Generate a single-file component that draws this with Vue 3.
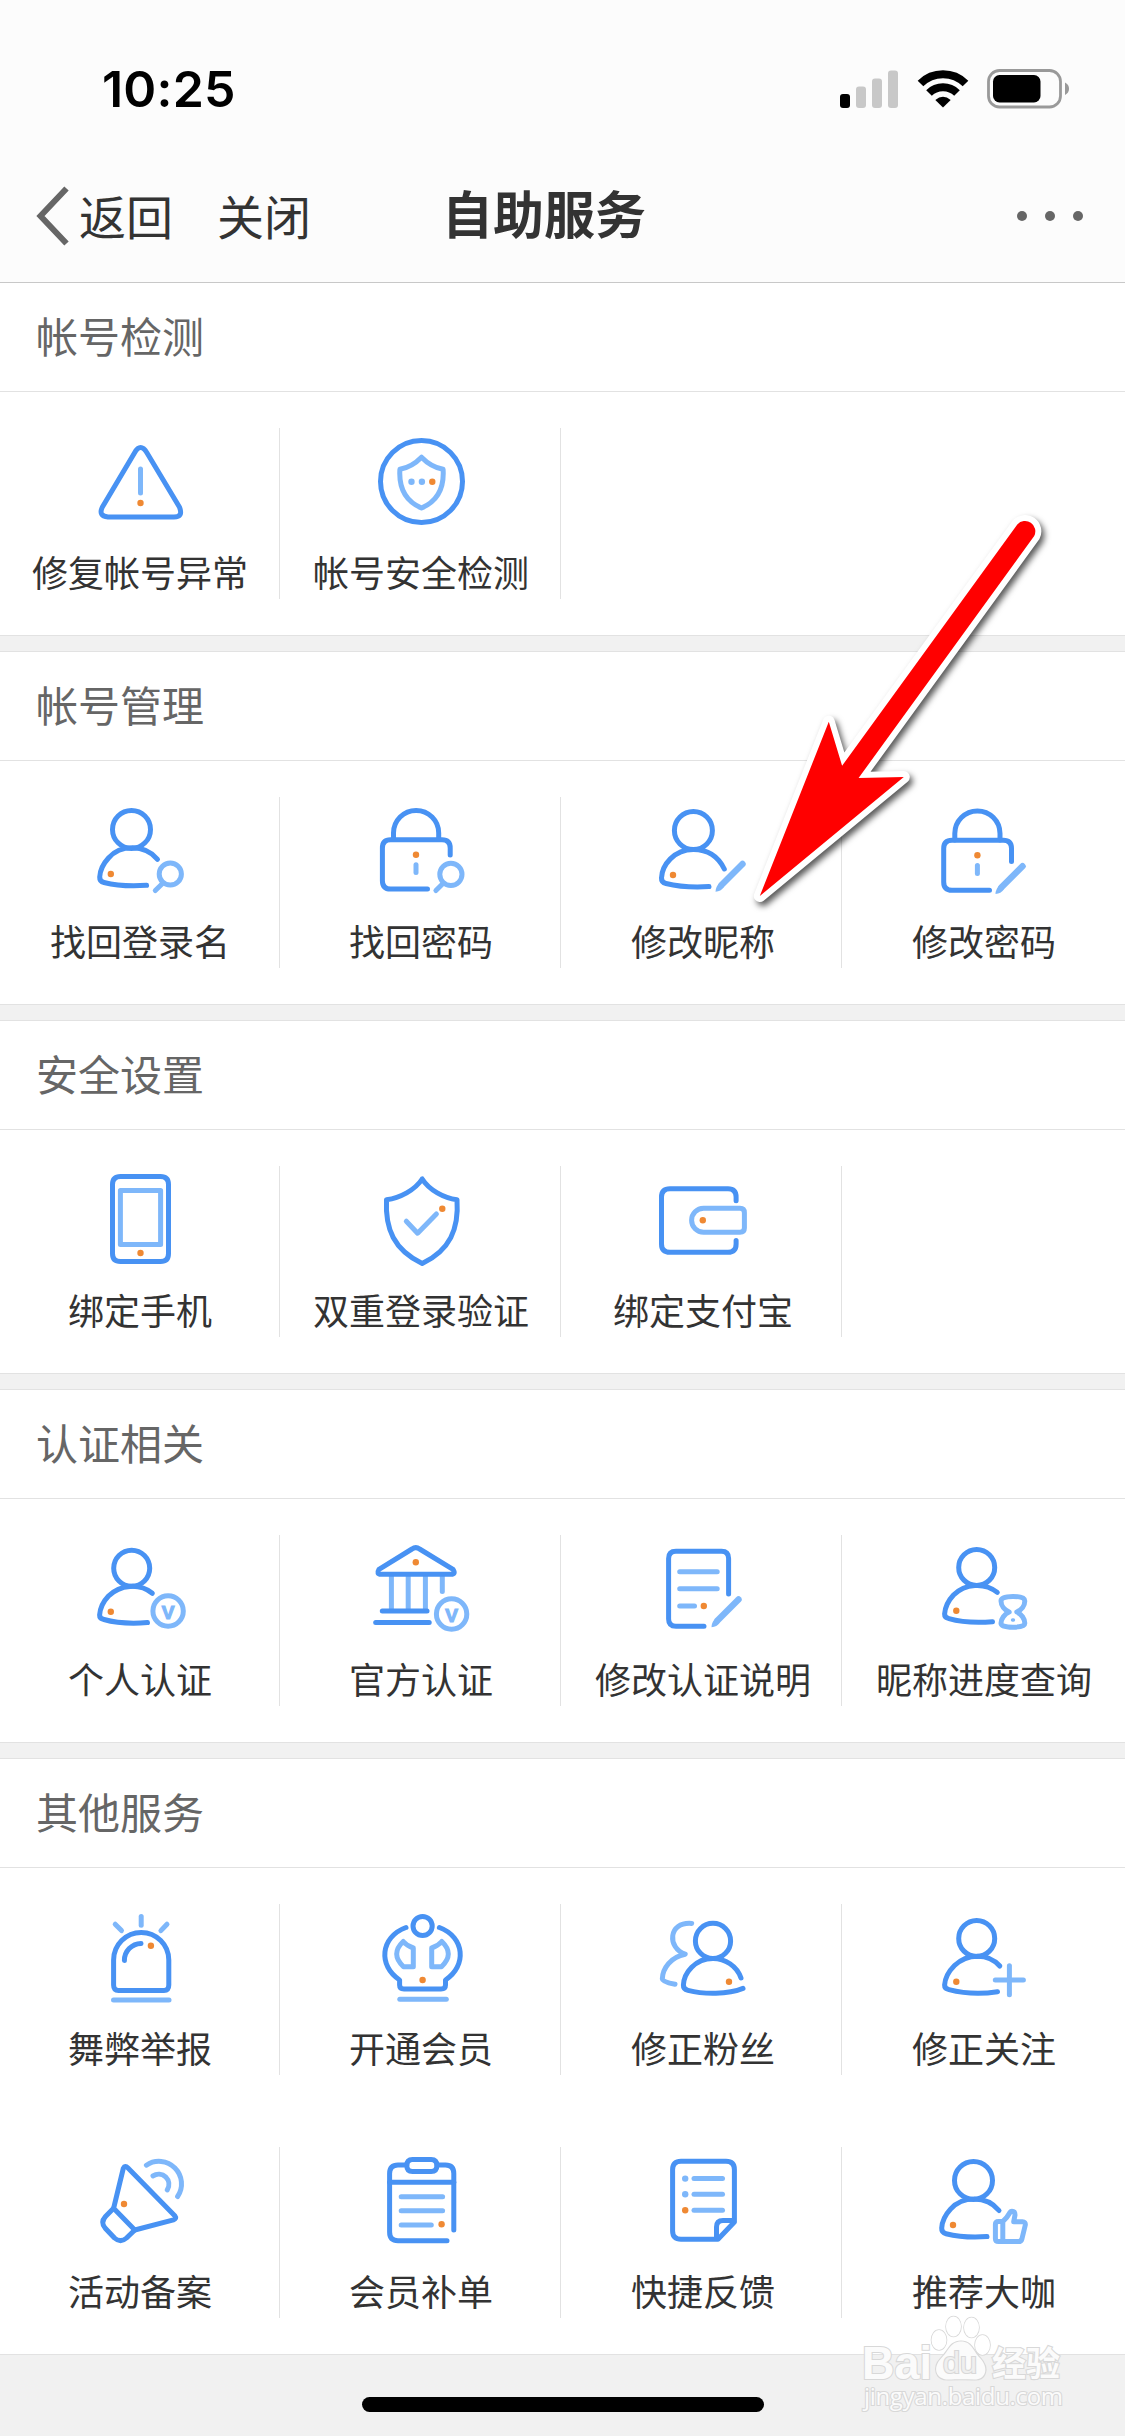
<script setup>
const ring = (x, y, r) => `M${x - r} ${y}a${r} ${r} 0 1 0 ${2 * r} 0a${r} ${r} 0 1 0 ${-2 * r} 0Z`

const icons = {
  warning: {
    main: ['M54.6 24.7Q60.5 14.4 66.9 24.7L99.4 79Q103.5 89 94 89H28Q18 88 22.4 79Z'],
    light: ['M60.5 41V65'],
    dots: [[60.5, 75]],
  },
  shieldRing: {
    main: [ring(61.5, 53.5, 41)],
    light: ['M61.5 29.2Q52 39 39.9 41.3Q38 70 61.5 80Q85 70 83.1 41.3Q71 39 61.5 29.2Z'],
    dots: [[72.3, 53.7]],
    lightDots: [[51.5, 53.7], [61.9, 53.7]],
  },
  userSearch: {
    main: [ring(51.5, 32.4, 19), 'M77.5 62.3C64 46.5 40 48 28.5 61C22.5 67.5 20 74 19.7 80Q19.5 84.5 24 85.5C36 88.5 52 89.3 66.6 88.3'],
    light: [ring(90.3, 77, 11.1), 'M82.5 86.5L75.3 93.5'],
    dots: [[30.8, 77]],
  },
  lockSearch: {
    main: ['M33.5 42V36A22.6 22.6 0 0 1 78.7 36V42', 'M90.2 58V51Q90.2 42.7 82 42.7H30.5Q22.4 42.7 22.4 51V83.7Q22.4 92 30.5 92H67.5'],
    light: ['M56 67.7V75.5', ring(90.9, 77.3, 11.1), 'M83 86.5L75.9 93.5'],
    dots: [[56, 57.7]],
  },
  userEdit: {
    main: [ring(52.4, 33.5, 19), 'M83.3 72C76 57 64 52.5 52.4 52.5C33 52.5 21 68 20.5 81Q20.3 85.5 25 86.5C37 89.5 53 90.5 68 89.6'],
    dots: [[32, 78]],
    pen: [0, 0],
  },
  lockEdit: {
    main: ['M31.8 43V36.5A22.6 22.6 0 0 1 77 36.5V43', 'M88.5 64.5V51.5Q88.5 43.3 80.3 43.3H29Q20.7 43.3 20.7 51.5V85Q20.7 93.3 29 93.3H66.5'],
    light: ['M54.4 68.5V76.5'],
    dots: [[54.4, 58.3]],
    pen: [-2, 2.2],
  },
  phone: {
    main: ['M40.5 10.5H80.5Q88.5 10.5 88.5 18.5V87.5Q88.5 95.5 80.5 95.5H40.5Q32.5 95.5 32.5 87.5V18.5Q32.5 10.5 40.5 10.5Z'],
    light: ['M40.4 24.5H80.6V78.5H40.4Z'],
    dots: [[60.5, 87]],
  },
  shieldCheck: {
    main: ['M62.2 13C55 24 40 32 26.5 33.7C25 63 34 84 62.2 97.5C90 84 99 63 97 33.7C84 32 69 24 62.2 13Z'],
    light: ['M46.3 55.2L57.6 67.2L76.4 48'],
    dots: [[82.3, 42.7]],
  },
  wallet: {
    main: ['M95.1 34.7V31Q95.1 22.7 87 22.7H29Q20.5 22.7 20.5 31V78Q20.5 86.3 29 86.3H87Q95.1 86.3 95.1 78V74.5'],
    light: ['M62.6 42.3H99Q103.4 42.3 103.4 46.7V62Q103.4 66.3 99 66.3H62.6A12 12 0 0 1 62.6 42.3Z'],
    dots: [[61.8, 54.3]],
  },
  userVerified: {
    main: [ring(51.7, 33.3, 18), 'M72.3 58.3C59.5 47.8 40 49.5 28.5 61C23 66.8 20 74 19.6 80Q19.5 83.5 24 84.5C36 88 52 88.8 67.5 87.6'],
    dots: [[30.8, 76.7]],
    badge: [88.1, 76],
  },
  bank: {
    main: ['M52 14Q55.8 11.2 59.6 14L93 34.3Q96.2 39.3 91 39.3H21Q16 39.3 19 34.3Z', 'M22.3 76H67', 'M15.7 87.6H69.2'],
    under: ['M31.4 41V74', 'M48.2 41V74', 'M65.4 41V74', 'M82.3 41V56.5'],
    dots: [[55.8, 27.3]],
    badge: [91.6, 79],
  },
  docEdit: {
    main: ['M87.6 59V23.5Q87.6 16.3 80.5 16.3H35Q27.6 16.3 27.6 23.5V84Q27.6 91.3 35 91.3H63'],
    light: ['M38.7 36.7H76.2', 'M38.7 53.7H76.2', 'M38.7 71H53.5'],
    dots: [[62.8, 71]],
    pen: [-4, -2.5],
  },
  userHourglass: {
    main: [ring(53.7, 32.4, 18), 'M74.3 57.4C61.5 46.9 42 48.6 30.5 60C25 65.9 22 73 21.6 79Q21.5 82.6 26 83.6C38 87.1 54 87.9 69.5 86.7'],
    light: ['M90 61.5Q101.8 61.5 101.8 66C101.8 70.5 98.5 75 93.8 77C98.5 79 101.8 84 101.8 88.2Q101.8 92.2 90 92.2Q78 92.2 78 88.2C78 84 81.5 79 86.2 77C81.5 75 78 70.5 78 66Q78 61.5 90 61.5Z', 'M89.6 85H90.4'],
    dots: [[33.3, 75.7]],
    thinLast: true,
  },
  siren: {
    main: ['M33.6 81V56A27.6 27.6 0 0 1 88.8 56V81Q88.8 86.4 84 86.4H38.5Q33.6 86.4 33.6 81Z', 'M61 39.4A17 17 0 0 0 44.4 56.5'],
    light: ['M61.2 12.5V21.3', 'M35.2 20.2L41.5 26.6', 'M87 20.2L80.9 26.6', 'M33.5 96H89'],
    dots: [[70.9, 41.7]],
  },
  member: {
    main: [ring(62.6, 22, 9.6), 'M46 23.5C20 33 18 62 39.6 76V81Q39.6 85 44 85H81Q85.5 85 85.5 81V76C107 62 105 33 79.4 23.5'],
    light: ['M43.2 37.5Q47 42 53.3 44V62.7H43.5Q30 50 43.2 37.5Z', 'M81.8 37.5Q78 42 71.7 44V62.7H81.5Q95 50 81.8 37.5Z', 'M39.8 95.3H86.3'],
    dots: [[62.6, 76]],
  },
  fans: {
    main: [ring(72, 36.9, 17.6), 'M100 74C96 62 84 54.5 72 54.5C54 54.5 43 69 42.4 81Q42.2 85 47 86.3C63 90.5 87 90.5 102 84.4'],
    light: ['M50.7 19.4C27 17.5 26 44 44.2 50.2C30 53 21.5 64 21.3 75Q21.3 77.8 34 80.3'],
    dots: [[88, 77.7]],
  },
  userPlus: {
    main: [ring(53.7, 34.4, 18), 'M76.8 62C65 48.5 44 49.5 31.5 61.5C25 68 22 74 21.6 81Q21.5 84.6 26 85.6C41 89.5 60 90 74.5 87.7'],
    light: ['M72.3 76H100.4', 'M86.4 61.7V90.7'],
    dots: [[33.3, 77.7]],
  },
  megaphone: {
    main: ['M33.6 61.3L43.3 21.3Q45 18 48 21L95 69Q97 71.5 93.5 72.8L54.8 83Z', 'M33.6 61.3L25.5 69.5Q20 75.5 25.5 81.5L34.5 91Q40.5 96.3 46.5 91L54.8 83'],
    light: ['M66.4 18.2A22.5 22.5 0 0 1 97.6 49.5', 'M73 28.9A10.2 10.2 0 0 1 87.3 42.8'],
    dots: [[44, 57]],
  },
  clipboard: {
    main: ['M93.8 83V26.5Q93.8 18 85.5 18H77', 'M46.8 18H38Q29.6 18 29.6 26.5V85Q29.6 93.7 38 93.7H87', 'M29.6 35.3H93.8', 'M52.5 12.5H71.2Q76.9 12.5 76.9 18.5Q76.9 24.5 71.2 24.5H52.5Q46.8 24.5 46.8 18.5Q46.8 12.5 52.5 12.5Z'],
    light: ['M41.2 49.7H82.6', 'M41.2 63.7H82.6', 'M41.2 78H71.3'],
    dots: [[81.6, 77.3]],
  },
  feedback: {
    main: ['M77 92.3H40Q31.6 92.3 31.6 84V22.5Q31.6 14.3 40 14.3H85Q93.4 14.3 93.4 22.5V75Z', 'M75.5 91V80Q75.5 73.5 82 73.5H92.5'],
    light: ['M53 31.6H81.5', 'M53 47.3H81.5', 'M53 63.2H81.5'],
    dots: [[44.2, 63.2]],
    lightDots: [[44.2, 31.6], [44.2, 47.3]],
  },
  recommend: {
    main: [ring(50.5, 33.4, 19), 'M76 63.5C63 47.7 39 49.2 27.5 62.2C21.5 68.7 19 75.2 18.7 81.2Q18.5 85.7 23 86.7C35 89.7 50 90.7 64 89.6'],
    light: ['M79.8 74.5H75.5Q72.4 74.5 72.4 77.5V91.5Q72.4 94.6 75.5 94.6H95.5Q98.2 94.6 98.9 92L102.3 78Q102.7 74.7 99.5 74.7H90.7L92 68Q92 64.3 89 64.3Q87.5 64.3 86.8 65.8Q84 71 79.8 74.5V94'],
    dots: [[30, 78]],
  },
}

const sections = [
  { title: '帐号检测', items: [['warning', '修复帐号异常'], ['shieldRing', '帐号安全检测']] },
  { title: '帐号管理', items: [['userSearch', '找回登录名'], ['lockSearch', '找回密码'], ['userEdit', '修改昵称'], ['lockEdit', '修改密码']] },
  { title: '安全设置', items: [['phone', '绑定手机'], ['shieldCheck', '双重登录验证'], ['wallet', '绑定支付宝']] },
  { title: '认证相关', items: [['userVerified', '个人认证'], ['bank', '官方认证'], ['docEdit', '修改认证说明'], ['userHourglass', '昵称进度查询']] },
  {
    title: '其他服务',
    items: [
      ['siren', '舞弊举报'], ['member', '开通会员'], ['fans', '修正粉丝'], ['userPlus', '修正关注'],
      ['megaphone', '活动备案'], ['clipboard', '会员补单'], ['feedback', '快捷反馈'], ['recommend', '推荐大咖'],
    ],
  },
]
</script>

<template>
  <div class="screen">
    <header class="header">
      <div class="status">
        <span class="time">10:25</span>
        <div class="indicators">
          <svg class="signal" width="58" height="38" viewBox="0 0 58 38">
            <rect x="0" y="24" width="10" height="14" rx="3" fill="#000" />
            <rect x="16" y="16.5" width="10" height="21.5" rx="3" fill="#c8c8c8" />
            <rect x="32" y="8.5" width="10" height="29.5" rx="3" fill="#c8c8c8" />
            <rect x="48" y="0.5" width="10" height="37.5" rx="3" fill="#c8c8c8" />
          </svg>
          <svg class="wifi" width="52" height="38" viewBox="0 0 52 38">
            <g fill="none" stroke="#000" stroke-width="8">
              <path d="M3.5 13.500A32 32 0 0 1 48.500 13.500" />
              <path d="M12 23A20 20 0 0 1 40 23" />
            </g>
            <path d="M26 37.500L18.300 30Q26 23.500 33.700 30Z" />
          </svg>
          <svg class="battery" width="83" height="40" viewBox="0 0 83 40">
            <rect x="1.500" y="1.500" width="72" height="36.500" rx="11" fill="none" stroke="#999" stroke-width="2.800" />
            <rect x="6" y="6" width="47.500" height="27.500" rx="6.500" />
            <path d="M78 13.500Q82 15.500 82 19.750Q82 24 78 26Z" fill="#999" />
          </svg>
        </div>
      </div>
      <nav class="nav">
        <div class="nav-left">
          <svg width="36" height="62" viewBox="0 0 36 62">
            <path d="M31.500 3.500L5.500 31L31.500 58.500" fill="none" stroke="#666" stroke-width="6" />
          </svg>
          <span class="back">返回</span>
          <span>关闭</span>
        </div>
        <h1>自助服务</h1>
        <div class="more"><i></i><i></i><i></i></div>
      </nav>
    </header>

    <main>
      <section v-for="section in sections" :key="section.title" class="section">
        <h2>{{ section.title }}</h2>
        <div class="grid">
          <div v-for="[icon, label] in section.items" :key="label" class="cell">
            <div class="cell-body">
              <svg class="icon" width="120" height="108" viewBox="0 0 120 108">
                <path v-for="d in icons[icon].under" :key="d" :d="d" class="light" />
                <path v-for="d in icons[icon].main" :key="d" :d="d" class="main" />
                <path
                  v-for="(d, i) in icons[icon].light"
                  :key="d"
                  :d="d"
                  class="light"
                  :class="{ thin: icons[icon].thinLast && i === 1 }"
                />
                <circle v-for="[x, y] in icons[icon].lightDots" :key="`${x}-${y}`" :cx="x" :cy="y" r="3.200" class="light-dot" />
                <circle v-for="[x, y] in icons[icon].dots" :key="`${x}-${y}`" :cx="x" :cy="y" r="3.200" class="dot" />
                <g v-if="icons[icon].pen" :transform="`translate(${icons[icon].pen})`">
                  <path d="M101.500 67L80.500 88" class="light pen" />
                  <path d="M78.400 86Q74.500 90 74.500 94.800Q80 94.500 82.800 90.300Z" class="light-dot" />
                </g>
                <g v-if="icons[icon].badge" :transform="`translate(${icons[icon].badge})`">
                  <circle r="15.200" class="light" />
                  <text y="7.800" text-anchor="middle" class="badge-letter">V</text>
                </g>
              </svg>
              <span class="label">{{ label }}</span>
            </div>
          </div>
        </div>
      </section>
    </main>

    <footer class="footer"><div class="home-bar"></div></footer>

    <svg class="arrow" width="320" height="430" viewBox="740 500 320 430">
      <path
        d="M759.800 896L828.800 721.700L842.100 765.700L1017.300 524.500A10.300 10.300 0 0 1 1034.200 536L858.600 778L903.800 777Z"
        fill="#f00"
        stroke="#fff"
        stroke-width="12"
        stroke-linejoin="round"
        paint-order="stroke"
      />
    </svg>

    <svg class="watermark" width="210" height="106" viewBox="860 2312 210 106">
      <g class="wm">
        <ellipse cx="939" cy="2340" rx="7.500" ry="10" />
        <ellipse cx="953.500" cy="2326.500" rx="7.500" ry="10" />
        <ellipse cx="971.500" cy="2327.500" rx="7.500" ry="10" />
        <ellipse cx="982.500" cy="2345" rx="7.500" ry="10" />
        <path d="M961 2341.500C972 2341.500 973 2351 980 2358C990 2369 985 2380 974 2379.500C966 2379 956 2379 949 2379.500C936 2380 932 2368 941 2358.500C949 2351 950 2341.500 961 2341.500Z" />
        <text x="862" y="2378.500" font-size="46" font-weight="700" textLength="70" lengthAdjust="spacingAndGlyphs">Bai</text>
        <text x="943" y="2373" font-size="29" textLength="34" lengthAdjust="spacingAndGlyphs" class="du">du</text>
        <text x="992" y="2375.500" font-size="34" font-weight="700" class="cjk">经验</text>
        <text x="864" y="2405" font-size="24" textLength="199" lengthAdjust="spacing" class="url">jingyan.baidu.com</text>
      </g>
    </svg>
  </div>
</template>

<style>
html,
body {
  margin: 0;
  background: #f1f1f1;
}
</style>

<style scoped>
.screen {
  position: relative;
  display: flex;
  flex-direction: column;
  width: 1125px;
  height: 2436px;
  overflow: hidden;
  background: #f1f1f1;
  color: #333;
  font-family: "Noto Sans CJK SC", sans-serif;
}

.header {
  height: 283px;
  box-sizing: border-box;
  border-bottom: 1px solid #c8c8c8;
  background: #fcfcfc;
}

.status {
  display: flex;
  justify-content: space-between;
  align-items: center;
  height: 150px;
  box-sizing: border-box;
  padding: 28px 55px 0 102px;
}

.time {
  color: #000;
  font: 600 50px/60px Inter, sans-serif;
  letter-spacing: 0.2px;
}

.indicators {
  display: flex;
  align-items: center;
}

.wifi {
  margin-left: 19px;
}

.battery {
  margin-left: 18px;
}

.nav {
  display: grid;
  grid-template-columns: 1fr auto 1fr;
  align-items: center;
  height: 132px;
  padding: 0 42px 0 35px;
}

.nav-left {
  display: flex;
  align-items: center;
  font-size: 47px;
  line-height: 60px;
}

.nav-left span {
  padding-bottom: 3px;
}

.nav-left .back {
  margin: 0 44px 0 8px;
}

h1 {
  margin: 0;
  padding-bottom: 8px;
  transform: translateX(-15px);
  font-size: 51px;
  font-weight: 700;
  line-height: 60px;
}

.more {
  display: flex;
  justify-content: flex-end;
  gap: 18px;
}

.more i {
  width: 10px;
  height: 10px;
  border-radius: 50%;
  background: #666;
}

.section {
  margin-bottom: 15px;
  border-top: 1px solid #e2e2e2;
  border-bottom: 1px solid #e2e2e2;
  background: #fff;
}

.section:first-child {
  border-top: 0;
}

.section:last-child {
  margin-bottom: 0;
}

h2 {
  height: 108px;
  box-sizing: content-box;
  margin: 0;
  padding-left: 36px;
  border-bottom: 1px solid #e2e2e2;
  color: #666;
  font-size: 42px;
  font-weight: 400;
  line-height: 104px;
}

.grid {
  display: grid;
  grid-template-columns: 280px 281px 281px 283px;
}

.cell {
  height: 243px;
  box-sizing: border-box;
  padding: 36px 0;
}

.cell-body {
  display: flex;
  flex-direction: column;
  align-items: center;
  height: 171px;
  box-sizing: border-box;
  border-right: 1px solid #e2e2e2;
}

.cell:nth-child(4n + 1) .cell-body {
  padding-left: 1px;
}

.cell:nth-child(4n) .cell-body {
  padding-right: 1px;
  border-right: 0;
}

.icon {
  flex: none;
  display: block;
}

.label {
  margin-top: 8px;
  font-size: 36px;
  line-height: 54px;
  white-space: nowrap;
}

.cell:nth-child(4n + 2) .label,
.cell:nth-child(4n) .label {
  padding-left: 2px;
}

.cell:nth-child(4n + 3) .label {
  padding-left: 4px;
}

.main,
.light {
  fill: none;
  stroke: #4892f3;
  stroke-width: 5;
  stroke-linecap: round;
  stroke-linejoin: round;
}

.light {
  stroke: #7eb7fa;
}

.pen {
  stroke-width: 6.4;
}

.thin {
  stroke-width: 3.6;
}

.dot {
  fill: #ef8933;
}

.light-dot {
  fill: #7eb7fa;
}

.badge-letter {
  fill: #7eb7fa;
  stroke: #7eb7fa;
  stroke-width: 1.2;
  font: 700 19px "Liberation Sans", sans-serif;
}

.footer {
  display: flex;
  justify-content: center;
  padding-top: 42px;
}

.home-bar {
  width: 402px;
  height: 15px;
  border-radius: 8px;
  background: #000;
}

.arrow {
  position: absolute;
  top: 500px;
  left: 740px;
  filter: drop-shadow(3px 4px 3px rgba(0, 0, 0, 0.65));
}

.watermark {
  position: absolute;
  top: 2312px;
  left: 860px;
}

.wm {
  fill: #fbfbfb;
  stroke: #d8d8d8;
  stroke-width: 2.2;
  paint-order: stroke;
  font-family: "Liberation Sans", sans-serif;
}

.wm ellipse {
  fill: #fff;
  stroke-width: 1.6;
}

.du {
  fill: #efefef;
}

.cjk {
  font-family: "Noto Sans CJK SC", sans-serif;
}

.url {
  font-family: "Open Sans", sans-serif;
}
</style>
